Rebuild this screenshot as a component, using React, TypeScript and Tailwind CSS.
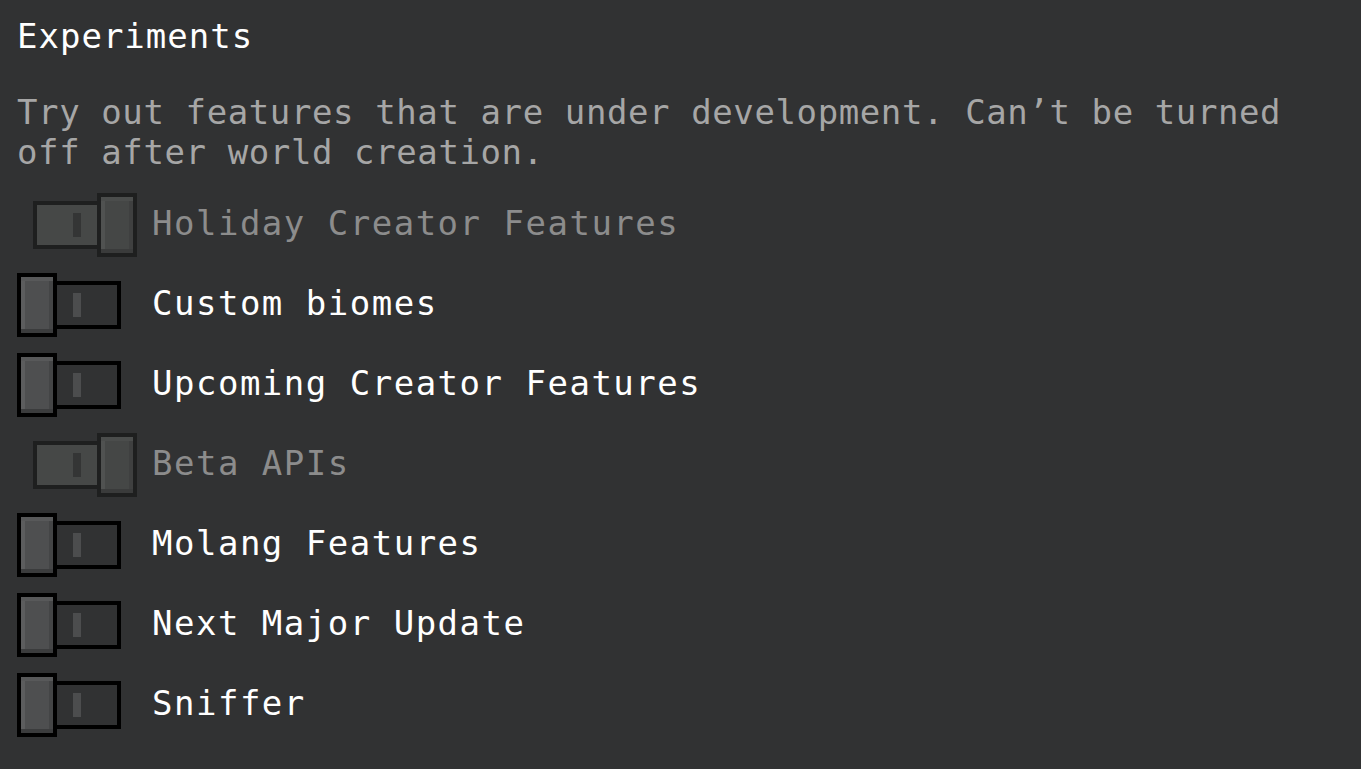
import React from "react";

type Item = { label: string; on: boolean; disabled: boolean };

const items: Item[] = [
  { label: "Holiday Creator Features", on: true, disabled: true },
  { label: "Custom biomes", on: false, disabled: false },
  { label: "Upcoming Creator Features", on: false, disabled: false },
  { label: "Beta APIs", on: true, disabled: true },
  { label: "Molang Features", on: false, disabled: false },
  { label: "Next Major Update", on: false, disabled: false },
  { label: "Sniffer", on: false, disabled: false },
];

function Toggle({ on }: { on: boolean }) {
  if (on) {
    return (
      <div className="relative w-[120px] h-16 shrink-0">
        <div className="absolute left-4 top-2 w-[104px] h-12 border-4 border-[#1e1f1f] bg-[#464847]">
          <div className="absolute left-[36px] top-[8px] w-2 h-6 bg-[#343535]" />
        </div>
        <div className="absolute left-20 top-0 w-10 h-16 border-4 border-[#1e1f1f] bg-[#3b3c3c]">
          <div className="w-full h-full flex flex-col">
            <div className="h-1 bg-[#4b4d4c]" />
            <div className="flex-1 flex">
              <div className="w-1 bg-[#505251]" />
              <div className="flex-1 bg-[#454746]" />
              <div className="w-1 bg-[#3f4040]" />
            </div>
            <div className="h-1 bg-[#3a3b3b]" />
          </div>
        </div>
      </div>
    );
  }
  return (
    <div className="relative w-[120px] h-16 shrink-0">
      <div className="absolute left-0 top-2 w-[104px] h-12 border-4 border-black bg-[#313233]">
        <div className="absolute left-[52px] top-[8px] w-2 h-6 bg-[#4c4d4e]" />
      </div>
      <div className="absolute left-0 top-0 w-10 h-16 border-4 border-black bg-[#3c3d3e]">
        <div className="w-full h-full flex flex-col">
          <div className="h-1 bg-[#58595a]" />
          <div className="flex-1 flex">
            <div className="w-1 bg-[#5c5d5e]" />
            <div className="flex-1 bg-[#4e4f50]" />
            <div className="w-1 bg-[#444546]" />
          </div>
          <div className="h-1 bg-[#3b3c3d]" />
        </div>
      </div>
    </div>
  );
}

export default function App() {
  return (
    <div
      className="w-[1361px] h-[769px] bg-[#313233] pl-[17px] pt-[16px] overflow-hidden"
      style={{ fontFamily: '"DejaVu Sans Mono", "Liberation Mono", monospace' }}
    >
      <div className="text-[34px] leading-[40px] tracking-[1px] text-white">Experiments</div>
      <div className="mt-[36px] text-[34px] leading-[40px] tracking-[0.6px] text-[#a6a6a6]">
        Try out features that are under development. Can’t be turned off after world creation.
      </div>
      <div className="mt-[21px] flex flex-col gap-4">
        {items.map((it) => (
          <div key={it.label} className="flex items-center h-16 gap-[15px]">
            <Toggle on={it.on} />
            <span
              className={
                "text-[34px] leading-[40px] tracking-[1.5px] -mt-[4px] " +
                (it.disabled ? "text-[#8c8c8c]" : "text-white")
              }
            >
              {it.label}
            </span>
          </div>
        ))}
      </div>
    </div>
  );
}
